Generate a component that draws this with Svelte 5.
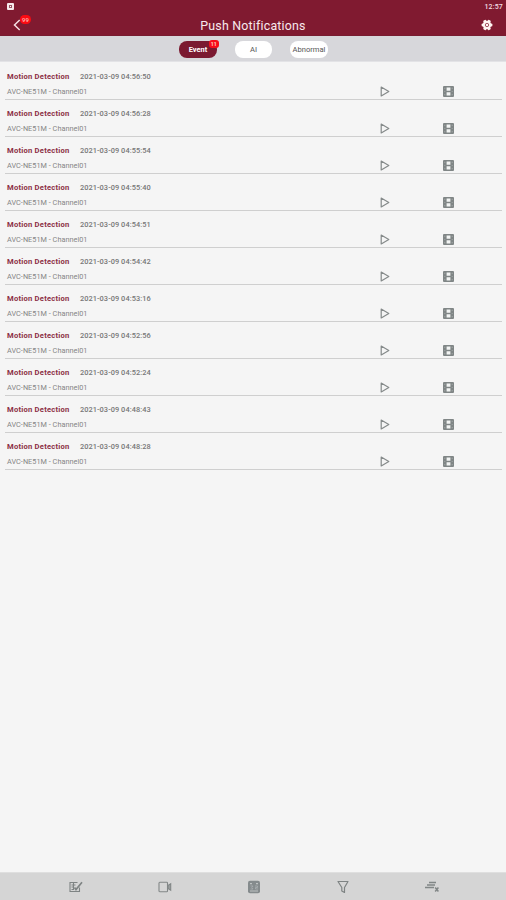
<script>
  const times = [
    '04:56:50', '04:56:28', '04:55:54', '04:55:40', '04:54:51', '04:54:42',
    '04:53:16', '04:52:56', '04:52:24', '04:48:43', '04:48:28'
  ];
</script>

<div class="screen">
  <header>
    <div class="status">
      <svg width="7" height="7" viewBox="0 0 7 7"><rect width="7" height="7" rx="1" fill="#f6e9eb" /><rect x="2" y="2" width="3" height="3" fill="#9a5362" /><rect x="3" y="3" width="1" height="1" fill="#fff" /></svg>
      <span>12:57</span>
    </div>
    <div class="bar">
      <div class="back">
        <svg width="8" height="12" viewBox="0 0 8 12"><path d="M6.7 1 1.5 6l5.2 5" fill="none" stroke="#f4dfe3" stroke-width="1.5" /></svg>
        <b class="count">99</b>
      </div>
      <h1>Push Notifications</h1>
      <svg class="gear" width="12" height="12" viewBox="0 0 12 12">
        <g fill="#fff4f2">
          <circle cx="6" cy="6" r="4.2" />
          {#each [30, 90, 150] as angle}
            <rect x="4.4" y="0.6" width="3.2" height="10.8" rx="1" transform="rotate({angle} 6 6)" />
          {/each}
        </g>
        <circle cx="6" cy="6" r="1.7" fill="none" stroke="#9a4254" stroke-width="0.9" />
      </svg>
    </div>
  </header>

  <nav class="tabs">
    <button class="active">Event<b class="badge">11</b></button>
    <button>AI</button>
    <button>Abnormal</button>
  </nav>

  <main>
    {#each times as time}
      <article>
        <div class="info">
          <div class="top"><strong>Motion Detection</strong><time>2021-03-09 {time}</time></div>
          <div class="source">AVC-NE51M - Channel01</div>
        </div>
        <svg class="play" width="10" height="11" viewBox="0 0 10 11"><path d="M1.2 1.1v8.8l7.6-4.4z" fill="none" stroke="#858a8a" stroke-width="1.2" stroke-linejoin="round" /></svg>
        <svg class="film" width="11" height="11" viewBox="0 0 11 11">
          <rect width="11" height="11" rx="1" fill="#808686" />
          <path d="M3.6 1.5h3.8v3.2H3.6zM3.6 6.3h3.8v3.2H3.6z" fill="#f2f4f3" />
          <path d="M1.3 1.8h1v1.2h-1zM1.3 4.9h1v1.2h-1zM1.3 8h1v1.2h-1zM8.7 1.8h1v1.2h-1zM8.7 4.9h1v1.2h-1zM8.7 8h1v1.2h-1z" fill="#a0a5a5" />
        </svg>
      </article>
    {/each}
  </main>

  <footer>
    <svg width="14" height="12" viewBox="0 0 14 12" fill="none" stroke="#7f8484" stroke-width="1.1"><path d="M8.5 1.500H1v9h9.500V6.500M2.500 4h4M2.500 6h2.500M2.500 8.500h2M4.500 2v7" /><path d="m5.500 6.500 1.500 2L13 1.200" stroke-width="1.700" /></svg>
    <svg width="14" height="12" viewBox="0 0 14 12" fill="none" stroke="#828787" stroke-width="1.1"><rect x="1" y="1.300" width="8.500" height="9.400" rx="0.800" /><path d="M10 4.500 12.700 2.700v6.600L10 7.500z" fill="#9a9e9e" /></svg>
    <svg width="14" height="14" viewBox="0 0 14 14"><rect x="1" y="0.800" width="12" height="12.400" rx="2" fill="#858b8d" /><path d="M3 3h2v1.300H3zM9 3h2v1.300H9zM3 10.500h8v.9H3z" fill="#bfc3c4" /><path d="M3.500 6H6L4.800 7.500 6 9H3.500M8 6h2.500v1.500H8.500V9H11" fill="none" stroke="#abb0b2" stroke-width="0.800" /></svg>
    <svg width="12" height="14" viewBox="0 0 12 14"><path d="M1 1.500h10L7.500 7.500v5L4.800 11V7.500z" fill="none" stroke="#7e8383" stroke-width="1.200" stroke-linejoin="round" /></svg>
    <svg width="16" height="12" viewBox="0 0 16 12" fill="none" stroke="#818686"><path d="M5 1.500h7M3 4h8M1 6.500h9" stroke-width="1.400" /><path d="m11.200 6.500 3.200 4m0-4-3.200 4" stroke-width="1.500" /></svg>
  </footer>
</div>

<style>
  .screen {
    display: flex;
    flex-direction: column;
    width: 506px;
    height: 900px;
    background: #f5f5f5;
    font-family: Roboto, "Liberation Sans", sans-serif;
    overflow: hidden;
  }
  header {
    height: 36px;
    box-sizing: border-box;
    background: #801a30;
    border-bottom: 1px solid #781c30;
    color: #fff;
  }
  .status {
    display: flex;
    justify-content: space-between;
    height: 13px;
    padding: 3px 3px 0 7px;
    box-sizing: border-box;
    font-size: 7px;
    line-height: 8px;
    font-weight: 500;
    letter-spacing: 0.15px;
    color: #f3dfe3;
  }
  .bar {
    display: grid;
    grid-template-columns: 60px 1fr 60px;
    align-items: center;
    height: 24px;
  }
  .back {
    position: relative;
    height: 12px;
    padding-left: 13px;
    line-height: 0;
  }
  .count {
    position: absolute;
    left: 20px;
    top: -4px;
    width: 11px;
    height: 9px;
    border-radius: 5px;
    background: #fb0b12;
    color: #ffb5ae;
    font-size: 6px;
    line-height: 9px;
    font-weight: 500;
    text-align: center;
  }
  h1 {
    margin: 1px 0 0;
    text-align: center;
    font-size: 12.4px;
    line-height: 16px;
    font-weight: 400;
    letter-spacing: 0.2px;
    color: #f8e9ec;
  }
  .gear {
    justify-self: end;
    margin-right: 13px;
  }
  .tabs {
    display: flex;
    justify-content: center;
    gap: 18px;
    height: 26px;
    box-sizing: border-box;
    padding: 5px 0 0 1px;
    background: #d7d7db;
    border-bottom: 1px solid #e3e3e6;
  }
  button {
    position: relative;
    width: 37.5px;
    height: 16.5px;
    padding: 0;
    border: 0;
    border-radius: 8px;
    background: #fff;
    color: #555;
    font-family: inherit;
    font-size: 7.6px;
    line-height: 17px;
    white-space: nowrap;
  }
  .active {
    background: #7b1a31;
    color: #fff;
    font-weight: 700;
    font-size: 7.4px;
  }
  .badge {
    position: absolute;
    right: -2px;
    top: -1px;
    width: 10px;
    height: 8px;
    border-radius: 3px;
    background: #f80d19;
    color: #ffc1bc;
    font-size: 5px;
    line-height: 8px;
  }
  main {
    flex: 1;
    padding: 1.2px 4px 0 5px;
  }
  article {
    display: flex;
    height: 36.95px;
    box-sizing: border-box;
    padding: 0 48px 0 2px;
    border-bottom: 1px solid #cfcfcf;
  }
  .info {
    width: 373px;
    padding-top: 8px;
  }
  .top {
    display: flex;
    height: 12px;
    font-size: 7.6px;
    line-height: 12px;
    white-space: pre;
  }
  strong {
    width: 73px;
    font-weight: 700;
    letter-spacing: 0.24px;
    color: #8c2f45;
  }
  time {
    font-weight: 500;
    font-size: 7.4px;
    letter-spacing: 0.06px;
    color: #777;
  }
  .source {
    margin-top: 3px;
    font-size: 7.3px;
    letter-spacing: 0.02px;
    line-height: 12px;
    color: #858585;
  }
  .play, .film {
    flex: none;
    margin-top: 23px;
  }
  .film {
    margin-left: auto;
  }
  footer {
    display: grid;
    grid-template-columns: repeat(5, 89px);
    justify-content: center;
    place-items: center;
    height: 28px;
    box-sizing: border-box;
    padding-left: 1px;
    border-top: 1px solid #dfdfdf;
    background: #d5d5d5;
  }
</style>
